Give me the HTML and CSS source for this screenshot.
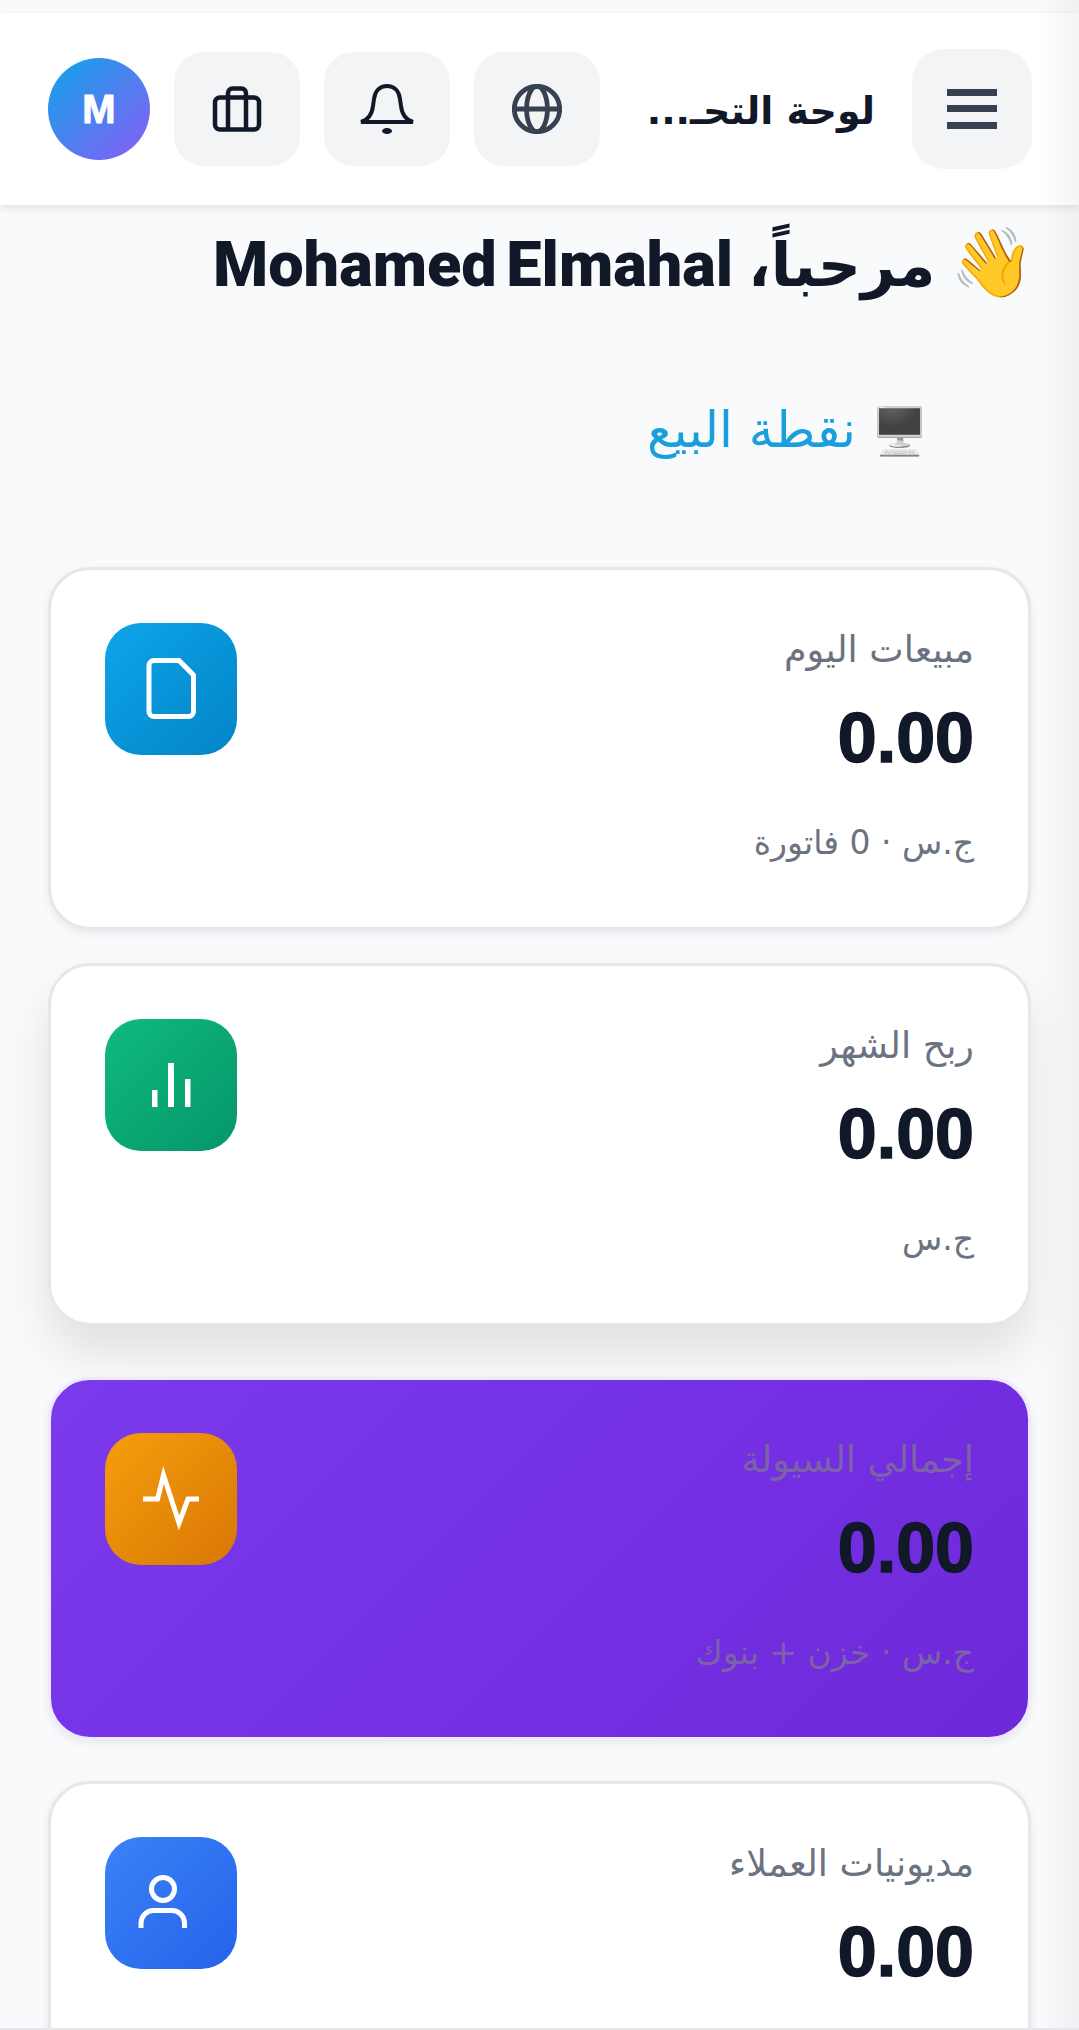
FILE: index.html
```html
<!DOCTYPE html>
<html lang="ar" dir="rtl">
<head>
    <meta charset="UTF-8">
    <meta name="viewport" content="width=device-width, initial-scale=1.0">
    <title>لوحة التحكم</title>
    <link rel="stylesheet" href="styles.css">
</head>
<body>

<div class="side-shade"></div>

<header class="topbar">
    <button class="menu-btn">
        <svg width="50" height="40" viewBox="0 0 50 40" fill="#374151"><rect width="50" height="7" y="0"/><rect width="50" height="7" y="16"/><rect width="50" height="7" y="33"/></svg>
    </button>
    <h1 class="page-title">لوحة التحـ...</h1>
    <div class="top-actions">
        <button class="icon-btn">
            <svg width="50" height="50" viewBox="0 0 24 24" fill="none" stroke="#374151" stroke-width="2.3"><circle cx="12" cy="12" r="10.900"/><ellipse cx="12" cy="12" rx="5" ry="10.900"/><path d="M1 12h22"/></svg>
        </button>
        <button class="icon-btn">
            <svg width="54" height="50" viewBox="0 0 54 50" fill="none" stroke="#111827" stroke-width="4"><path d="M1 38c7-2 11-8 12-16l1-7c1-8 6-13 13-13s12 5 13 13l1 7c1 8 5 14 12 16z"/><ellipse cx="27" cy="47" rx="5" ry="3" fill="#111827" stroke="none"/></svg>
        </button>
        <button class="icon-btn">
            <svg width="50" height="46" viewBox="0 0 50 46" fill="none" stroke="#111827" stroke-width="4.500"><rect x="3" y="11.500" width="44" height="32" rx="5"/><path d="M16 43V7a4.500 4.500 0 0 1 4.500-4.500h9A4.500 4.500 0 0 1 34 7v36"/></svg>
        </button>
        <div class="avatar">M</div>
    </div>
</header>

<main class="content">
    <h2 class="welcome"><span class="emoji wave">👋</span> مرحباً، <span class="user-name">Mohamed Elmahal</span></h2>

    <a class="pos-link" href="#"><span class="emoji pos-emoji">🖥️</span> نقطة البيع</a>

    <section class="card card-sales">
        <div class="card-info">
            <div class="card-label">مبيعات اليوم</div>
            <div class="card-value">0.00</div>
            <div class="card-sub">ج.س · 0 فاتورة</div>
        </div>
        <div class="card-icon icon-sky">
            <svg width="64" height="64" viewBox="0 0 64 64" fill="none" stroke="#fff" stroke-width="5"><path d="M15 3.500h25L54.500 18v36.500a5 5 0 0 1-5 5H15a5 5 0 0 1-5-5v-46a5 5 0 0 1 5-5z"/></svg>
        </div>
    </section>

    <section class="card card-profit">
        <div class="card-info">
            <div class="card-label">ربح الشهر</div>
            <div class="card-value">0.00</div>
            <div class="card-sub">ج.س</div>
        </div>
        <div class="card-icon icon-green">
            <svg width="64" height="64" viewBox="0 0 64 64" fill="#fff"><rect x="13" y="37" width="5.500" height="17"/><rect x="29" y="10" width="6" height="44"/><rect x="46" y="26" width="5.500" height="28"/></svg>
        </div>
    </section>

    <section class="card card-cash">
        <div class="card-info">
            <div class="card-label">إجمالي السيولة</div>
            <div class="card-value">0.00</div>
            <div class="card-sub">ج.س · خزن + بنوك</div>
        </div>
        <div class="card-icon icon-orange">
            <svg width="64" height="64" viewBox="0 0 64 64" fill="none" stroke="#fff" stroke-width="5"><path d="M4 32h14.500L24.500 8 40 56l9-24h11"/></svg>
        </div>
    </section>

    <section class="card card-debts">
        <div class="card-info">
            <div class="card-label">مديونيات العملاء</div>
            <div class="card-value">0.00</div>
        </div>
        <div class="card-icon icon-blue">
            <svg width="64" height="64" viewBox="0 0 64 64" fill="none" stroke="#fff" stroke-width="5"><circle cx="24" cy="18" r="11.500"/><path d="M2 57v-5a12.500 12.500 0 0 1 12.500-12.500H33A12.500 12.500 0 0 1 45.500 52v5"/></svg>
        </div>
    </section>
</main>

</body>
</html>
```

FILE: styles.css
```css
* {
    box-sizing: border-box;
}

html, body {
    margin: 0;
    height: 2030px;
    overflow: hidden;
}

body {
    position: relative;
    padding-top: 13px;
    border-bottom: 2px solid #e5e7eb;
    font-family: "DejaVu Sans", sans-serif;
    background-color: #f9fafb;
    color: #111827;
}

/* ظل خفيف على الحافة اليمنى */
.side-shade {
    position: absolute;
    top: 0;
    right: 0;
    width: 40px;
    height: 100%;
    background: linear-gradient(to left, rgba(0, 0, 0, 0.04), rgba(0, 0, 0, 0));
    z-index: 5;
}

.topbar {
    display: flex;
    align-items: center;
    height: 192px;
    padding: 0 47px 0 48px;
    background-color: #fff;
    box-shadow: 0 3px 8px rgba(0, 0, 0, 0.1);
}

button {
    border: none;
    display: flex;
    align-items: center;
    justify-content: center;
    padding: 0;
}

.menu-btn {
    width: 120px;
    height: 120px;
    border-radius: 32px;
    background-color: #f3f4f6;
}

.page-title {
    margin: 4px 37px 0 0;
    font-size: 38px;
    font-weight: 700;
    white-space: nowrap;
}

.top-actions {
    display: flex;
    align-items: center;
    gap: 24px;
    margin-right: auto;
}

.icon-btn {
    width: 126px;
    height: 114px;
    border-radius: 30px;
    background-color: #f3f4f6;
}

.avatar {
    width: 102px;
    height: 102px;
    border-radius: 50%;
    display: flex;
    align-items: center;
    justify-content: center;
    font-family: "Liberation Sans", sans-serif;
    font-size: 40px;
    font-weight: 700;
    -webkit-text-stroke: 1px #fff;
    color: #fff;
    background: linear-gradient(135deg, #0ea5e9, #8b5cf6);
}

.content {
    padding: 13px 48px 0 48px;
}

.welcome {
    margin: 0;
    font-size: 60px;
    font-weight: 700;
    line-height: 90px;
    word-spacing: -6px;
    white-space: nowrap;
}

.user-name {
    font-family: Roboto, sans-serif;
    font-size: 63px;
    font-weight: 900;
}

.emoji {
    font-family: "Noto Color Emoji", sans-serif;
    font-size: 46px;
}

.wave {
    margin-right: -4px;
    font-size: 68px;
}

.pos-emoji {
    display: inline-block;
    filter: grayscale(1);
}

.pos-link {
    display: block;
    margin: 85px 102px 101px 0;
    font-size: 50px;
    line-height: 70px;
    color: #1a9fdc;
    text-decoration: none;
}

.card {
    display: flex;
    justify-content: space-between;
    align-items: flex-start;
    height: 363px;
    padding: 53px 54px 0 54px;
    border: 3px solid #e5e7eb;
    border-radius: 42px;
    background-color: #fff;
    box-shadow: 0 3px 8px rgba(0, 0, 0, 0.08);
}

.card-sales {
    margin-bottom: 33px;
}

.card-profit {
    margin-bottom: 51px;
    box-shadow: 0 28px 48px rgba(0, 0, 0, 0.1);
}

.card-cash {
    margin-bottom: 41px;
    border-color: #ede9fe;
    background: linear-gradient(135deg, #7c3aed, #6d28d9);
}

.card-label {
    font-size: 36.500px;
    line-height: 54px;
    color: #6b7280;
}

.card-value {
    margin-top: 23px;
    font-family: "Liberation Sans", sans-serif;
    font-size: 70px;
    font-weight: 700;
    -webkit-text-stroke: 1.500px #111827;
    line-height: 76px;
}

.card-sub {
    margin-top: 41px;
    font-size: 33px;
    line-height: 52px;
    color: #6b7280;
}

.card-cash .card-label,
.card-cash .card-sub {
    color: #7d62a8;
}

.card-icon {
    width: 132px;
    height: 132px;
    border-radius: 36px;
    display: flex;
    align-items: center;
    justify-content: center;
}

.card-icon svg {
    overflow: visible;
}

.icon-sky {
    background: linear-gradient(135deg, #0ea5e9, #0284c7);
}

.icon-green {
    background: linear-gradient(135deg, #10b981, #059669);
}

.icon-orange {
    background: linear-gradient(135deg, #f59e0b, #d97706);
}

.icon-blue {
    background: linear-gradient(135deg, #3b82f6, #2563eb);
}
```
